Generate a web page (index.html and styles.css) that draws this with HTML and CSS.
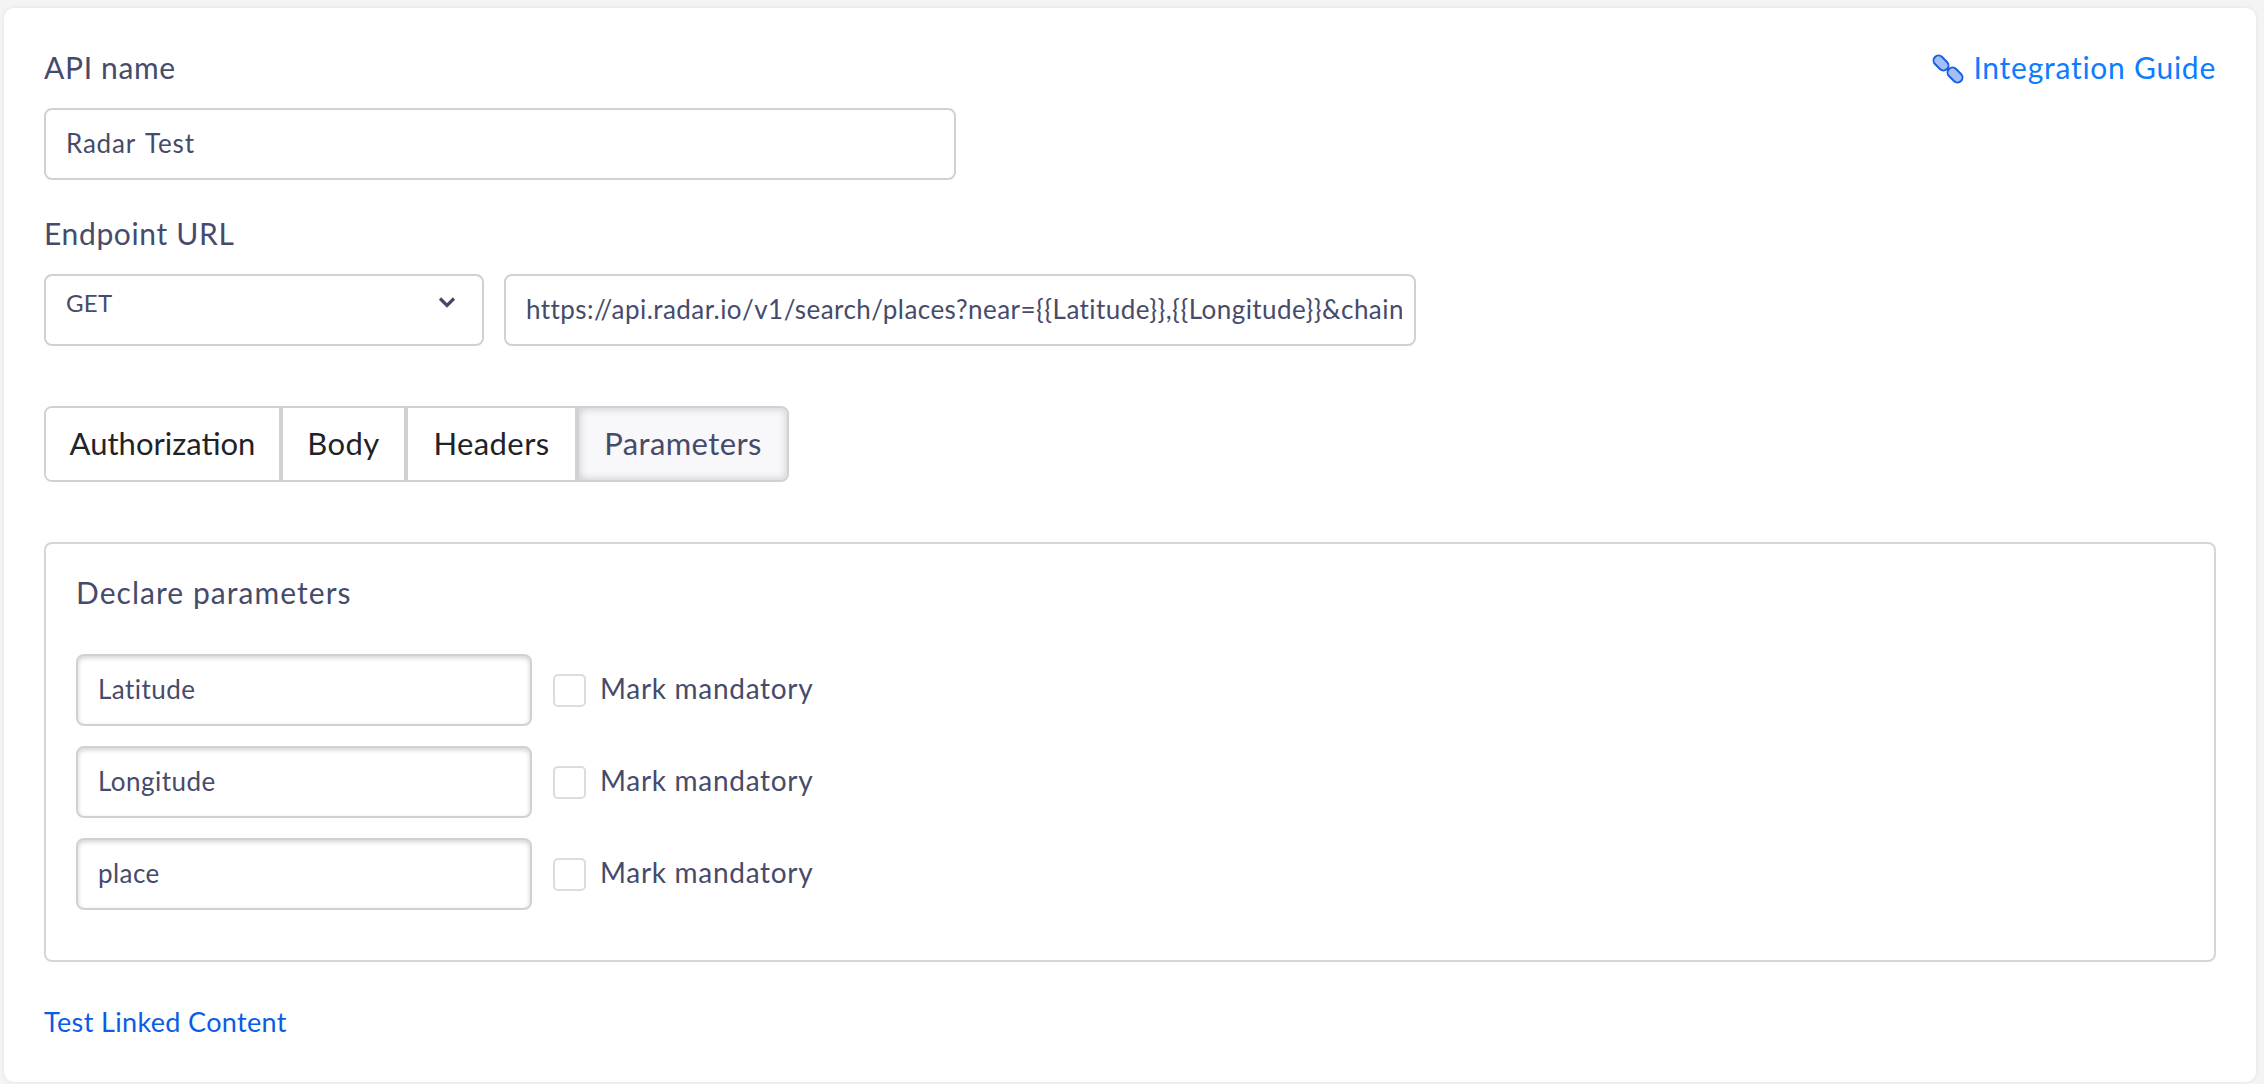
FILE: index.html
```html
<!DOCTYPE html>
<html lang="en">
<head>
<meta charset="utf-8">
<title>API configuration</title>
<link rel="stylesheet" href="styles.css">
</head>
<body>
<main class="card">
  <div class="top-row">
    <div class="label">API name</div>
    <a class="guide" href="#">
      <svg class="guide-icon" viewBox="0 0 32 32" width="32" height="32" aria-hidden="true">
        <line x1="11" y1="11" x2="21" y2="21" stroke="#1a5fe0" stroke-width="2"/>
        <rect x="0.5" y="5" width="17" height="10" rx="5" transform="rotate(45 9 10)" fill="#a3bff5" stroke="#1a5fe0" stroke-width="2"/>
        <rect x="14.5" y="17" width="17" height="10" rx="5" transform="rotate(45 23 22)" fill="#a3bff5" stroke="#1a5fe0" stroke-width="2"/>
      </svg>
      <span>Integration Guide</span>
    </a>
  </div>
  <input class="field name-field" type="text" value="Radar Test">
  <div class="label endpoint-label">Endpoint URL</div>
  <div class="endpoint-row">
    <div class="select">
      <span>GET</span>
      <svg class="chevron" viewBox="0 0 18 12" width="18" height="12" aria-hidden="true"><path d="M2 2.5 L9 9.5 L16 2.5" fill="none" stroke="#44496a" stroke-width="3.2"/></svg>
    </div>
    <input class="field url-field" type="text" value="https://api.radar.io/v1/search/places?near={{Latitude}},{{Longitude}}&amp;chain">
  </div>
  <div class="tabs">
    <button class="tab tab-auth" type="button">Authorization</button>
    <button class="tab tab-body" type="button">Body</button>
    <button class="tab tab-headers" type="button">Headers</button>
    <button class="tab tab-active" type="button">Parameters</button>
  </div>
  <section class="params">
    <div class="label params-title">Declare parameters</div>
    <div class="param-row">
      <input class="field param-field" type="text" value="Latitude">
      <span class="check"></span><span class="check-label">Mark mandatory</span>
    </div>
    <div class="param-row">
      <input class="field param-field" type="text" value="Longitude">
      <span class="check"></span><span class="check-label">Mark mandatory</span>
    </div>
    <div class="param-row">
      <input class="field param-field" type="text" value="place">
      <span class="check"></span><span class="check-label">Mark mandatory</span>
    </div>
  </section>
  <a class="test-link" href="#">Test Linked Content</a>
</main>
</body>
</html>
```
FILE: styles.css
```css
* { box-sizing: border-box; }
html, body { height: 100%; }
body {
  margin: 0;
  padding: 8px 8px 2px 4px;
  background: #f4f4f5;
  font-family: "Lato", "Liberation Sans", sans-serif;
  color: #464b6b;
  overflow: hidden;
}
.card {
  height: 1074px;
  background: #fff;
  border-radius: 10px;
  padding: 0 40px 0 40px;
  display: flex;
  flex-direction: column;
  box-shadow: 0 0 4px rgba(0,0,0,0.08);
}
.top-row {
  display: flex;
  justify-content: space-between;
  align-items: center;
  height: 100px;
  padding-top: 18px;
}
.label {
  font-size: 30px;
  letter-spacing: 0.65px;
  color: #464b6b;
}
.guide {
  display: flex;
  align-items: center;
  gap: 9px;
  font-size: 30px;
  letter-spacing: 0.75px;
  color: #0d7cff;
  text-decoration: none;
}
.guide-icon { display: block; margin-top: 3px; }
.field {
  display: block;
  height: 72px;
  border: 2px solid #d0d0d5;
  border-radius: 8px;
  background: #fff;
  padding: 0 12px 2px 20px;
  font: inherit;
  font-size: 26px;
  letter-spacing: 0.45px;
  color: #464b6b;
  outline: none;
}
.name-field { width: 912px; letter-spacing: 0.8px; word-spacing: 3px; }
.endpoint-label { margin-top: 33px; line-height: 40px; }
.endpoint-row {
  display: flex;
  gap: 20px;
  margin-top: 21px;
}
.select {
  width: 440px;
  height: 72px;
  border: 2px solid #d0d0d5;
  border-radius: 8px;
  padding: 12px 26px 0 20px;
  display: flex;
  justify-content: space-between;
  font-size: 24px;
  letter-spacing: 0.3px;
  line-height: 30px;
}
.chevron { margin-top: 8px; }
.url-field { width: 912px; }
.tabs {
  display: flex;
  align-self: flex-start;
  margin-top: 60px;
  height: 76px;
  border: 2px solid #d0d0d5;
  border-radius: 8px;
  overflow: hidden;
}
.tab {
  border: 0;
  border-right: 4px solid #d0d0d5;
  background: #fff;
  padding: 0 0 2px;
  font: inherit;
  font-size: 31px;
  letter-spacing: 0.4px;
  color: #1f2328;
}
.tab-auth { width: 237px; letter-spacing: 0; }
.tab-body { width: 125px; }
.tab-headers { width: 171px; }
.tab-active {
  width: 208px;
  border-right: 0;
  background: #f8f8fa;
  color: #464b6b;
  box-shadow: inset 0 0 10px rgba(0,0,0,0.2);
}
.params {
  margin-top: 60px;
  height: 420px;
  border: 2px solid #d5d5da;
  border-radius: 8px;
  padding: 28px 30px 0 30px;
}
.params-title {
  line-height: 40px;
  letter-spacing: 1.05px;
  margin-bottom: 42px;
}
.param-row {
  display: flex;
  align-items: center;
  margin-bottom: 20px;
}
.param-field {
  width: 456px;
  box-shadow: inset 0 2px 5px rgba(0,0,0,0.18);
}
.check {
  width: 33px;
  height: 33px;
  margin-left: 21px;
  margin-right: 14px;
  border: 2px solid #dcdce0;
  border-radius: 5px;
  background: #fff;
}
.check-label { font-size: 28px; letter-spacing: 0.7px; margin-top: -5px; }
.test-link {
  margin-top: 43px;
  font-size: 27px;
  letter-spacing: 0.35px;
  line-height: 34px;
  color: #0a5ce6;
  text-decoration: none;
  align-self: flex-start;
}
```
